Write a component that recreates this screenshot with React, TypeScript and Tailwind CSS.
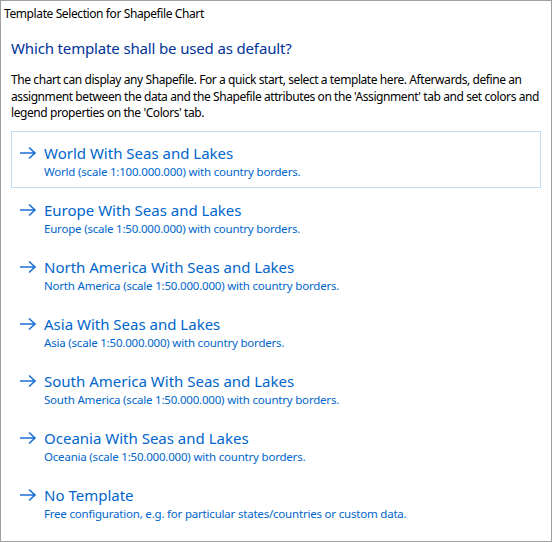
import React from 'react';

interface Template {
  title: string;
  desc: string;
}

const templates: Template[] = [
  { title: 'World With Seas and Lakes', desc: 'World (scale 1:100.000.000) with country borders.' },
  { title: 'Europe With Seas and Lakes', desc: 'Europe (scale 1:50.000.000) with country borders.' },
  { title: 'North America With Seas and Lakes', desc: 'North America (scale 1:50.000.000) with country borders.' },
  { title: 'Asia With Seas and Lakes', desc: 'Asia (scale 1:50.000.000) with country borders.' },
  { title: 'South America With Seas and Lakes', desc: 'South America (scale 1:50.000.000) with country borders.' },
  { title: 'Oceania With Seas and Lakes', desc: 'Oceania (scale 1:50.000.000) with country borders.' },
  { title: 'No Template', desc: 'Free configuration, e.g. for particular states/countries or custom data.' },
];

const Arrow = () => (
  <svg width="18" height="14" viewBox="0 0 18 14" className="shrink-0">
    <path d="M1 7h15M10 1.5 16 7l-6 5.5" fill="none" stroke="#1a6fd4" strokeWidth="1.6" />
  </svg>
);

const App: React.FC = () => {
  return (
    <div
      className="w-[552px] h-[542px] bg-white border border-[#a0a0a0] text-black overflow-hidden"
      style={{ fontFamily: '"Noto Sans", "Open Sans", sans-serif' }}
    >
      <div className="px-[3px] pt-[5px] text-[12px] leading-[16px] tracking-[-0.4px]">
        Template Selection for Shapefile Chart
      </div>
      <div className="px-[10px]">
        <h1 className="mt-[16px] text-[15px] leading-[20px] tracking-[-0.15px] text-[#003399]">
          Which template shall be used as default?
        </h1>
        <p className="mt-[14px] text-[12px] leading-[16.5px] tracking-[-0.42px]">
          The chart can display any Shapefile. For a quick start, select a template here. Afterwards, define an
          assignment between the data and the Shapefile attributes on the 'Assignment' tab and set colors and
          legend properties on the 'Colors' tab.
        </p>
        <div className="mt-[9px] w-[530px] flex flex-col">
          {templates.map((t, i) => (
            <div
              key={t.title}
              className={
                'h-[57px] border pl-[7px] pt-[11px] flex ' +
                (i === 0 ? 'border-[#bcdcf4]' : 'border-transparent')
              }
            >
              <div className="h-[20px] flex items-center">
                <Arrow />
              </div>
              <div className="pl-[7px] text-[#0066cc]">
                <div className="text-[15px] leading-[20px]">{t.title}</div>
                <div className="text-[11.5px] leading-[16px] mt-[1px] tracking-[-0.2px]">{t.desc}</div>
              </div>
            </div>
          ))}
        </div>
      </div>
    </div>
  );
};

export default App;
